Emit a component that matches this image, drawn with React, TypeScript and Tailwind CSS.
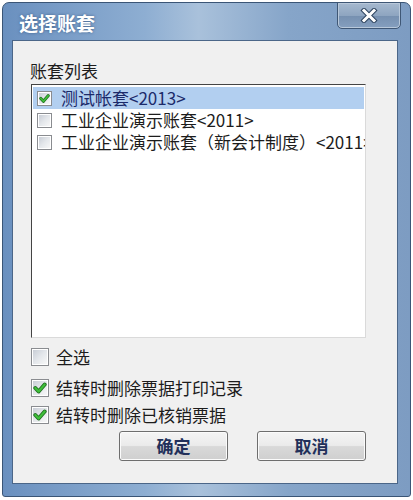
import React from "react";

const font = { fontFamily: '"Noto Sans CJK SC", "Noto Sans", sans-serif' };

function Check({ checked, size = 15 }: { checked?: boolean; size?: number }) {
  return (
    <div
      className="shrink-0 border border-[#8a8c90] bg-white p-[1px]"
      style={{ width: size, height: size }}
    >
      <div className="relative h-full w-full bg-gradient-to-br from-[#c9ced6] via-[#e4e7eb] to-[#f7f7f7]">
        {checked && (
          <svg viewBox="0 0 12 12" className="absolute inset-0 h-full w-full">
            <path d="M2 6 L4.8 9 L10 3" fill="none" stroke="#1f6d1f" strokeWidth="3.4" strokeLinecap="round" strokeLinejoin="round" />
            <path d="M2 6 L4.8 9 L10 3" fill="none" stroke="#3fbf3a" strokeWidth="1.9" strokeLinecap="round" strokeLinejoin="round" />
          </svg>
        )}
      </div>
    </div>
  );
}

function ListRow({ label, checked, selected }: { label: string; checked?: boolean; selected?: boolean }) {
  return (
    <div className={`flex h-[22px] items-center whitespace-nowrap pl-[4px] ${selected ? "bg-[#b2cff0]" : ""}`}>
      <Check checked={checked} size={15} />
      <span className={`ml-[9px] text-[17px] leading-[20px] ${selected ? "text-[#1b2a6a]" : "text-[#1c1c1c]"}`}>{label}</span>
    </div>
  );
}

function Option({ label, checked, className }: { label: string; checked?: boolean; className?: string }) {
  return (
    <div className={`flex h-[20px] items-center pl-[18px] ${className ?? ""}`}>
      <Check checked={checked} size={18} />
      <span className="ml-[7px] text-[17px] leading-[20px] text-[#1c1c1c]">{label}</span>
    </div>
  );
}

function Btn({ label }: { label: string }) {
  return (
    <button className="flex h-[30px] w-[109px] items-center justify-center rounded-[3px] border border-[#6e6e6e] bg-[linear-gradient(#f4f4f4_0%,#ebebeb_48%,#d9d9d9_52%,#cfcfcf_100%)] text-[17px] font-bold text-[#22305a] shadow-[inset_0_0_0_1px_#fbfbfb]">
      {label}
    </button>
  );
}

export default function App() {
  return (
    <div className="h-[500px] w-[413px] overflow-hidden bg-white pl-[2px] pt-[2px]" style={font}>
      <div className="flex h-[495px] w-[409px] flex-col rounded-t-[7px] rounded-b-[3px] border border-[#3a5576] bg-[linear-gradient(90deg,#6a90bf_0%,#8eaed2_35%,#a9c1db_48%,#86a5c9_70%,#7d9cc2_100%)]">
        {/* title bar */}
        <div className="flex h-[37px] shrink-0 items-start justify-between">
          <span className="ml-[16px] mt-[8px] text-[19px] font-bold leading-[24px] text-white [text-shadow:0_0_3px_#3d5f8a]">选择账套</span>
          <div className="mr-[9px] mt-[-1px] flex h-[27px] w-[64px] items-center justify-center rounded-b-[5px] border border-[#3f5775] bg-[linear-gradient(#a6b9cf_0%,#8ea5c0_50%,#7690b0_52%,#859fbf_100%)] shadow-[inset_0_0_0_1px_#b8c8da]">
            <svg width="18" height="15" viewBox="0 0 18 15">
              <path d="M4 2.5 L14 12.5 M14 2.5 L4 12.5" stroke="#2f4560" strokeWidth="5" strokeLinecap="square" />
              <path d="M4 2.5 L14 12.5 M14 2.5 L4 12.5" stroke="#ffffff" strokeWidth="3" strokeLinecap="square" />
            </svg>
          </div>
        </div>

        {/* client */}
        <div className="mb-[12px] ml-[9px] mr-[12px] flex-1 border border-[#4b6688] bg-[#f0f0f0]">
          <div className="ml-[17px] mt-[20px] text-[17px] leading-[20px] text-[#1c1c1c]">账套列表</div>
          <div className="ml-[18px] mt-[3px] h-[254px] w-[335px] overflow-hidden border border-b-[#dadada] border-l-[#444] border-r-[#dadada] border-t-[#444] bg-white pt-[2px] pr-[1px] pl-[1px]">
            <ListRow label="测试帐套<2013>" checked selected />
            <ListRow label="工业企业演示账套<2011>" />
            <ListRow label="工业企业演示账套（新会计制度）<2011>" />
          </div>
          <Option label="全选" className="mt-[9px]" />
          <Option label="结转时删除票据打印记录" checked className="mt-[11px]" />
          <Option label="结转时删除已核销票据" checked className="mt-[7px]" />
          <div className="ml-[106px] mt-[6px] flex gap-[29px]">
            <Btn label="确定" />
            <Btn label="取消" />
          </div>
        </div>
      </div>
    </div>
  );
}
